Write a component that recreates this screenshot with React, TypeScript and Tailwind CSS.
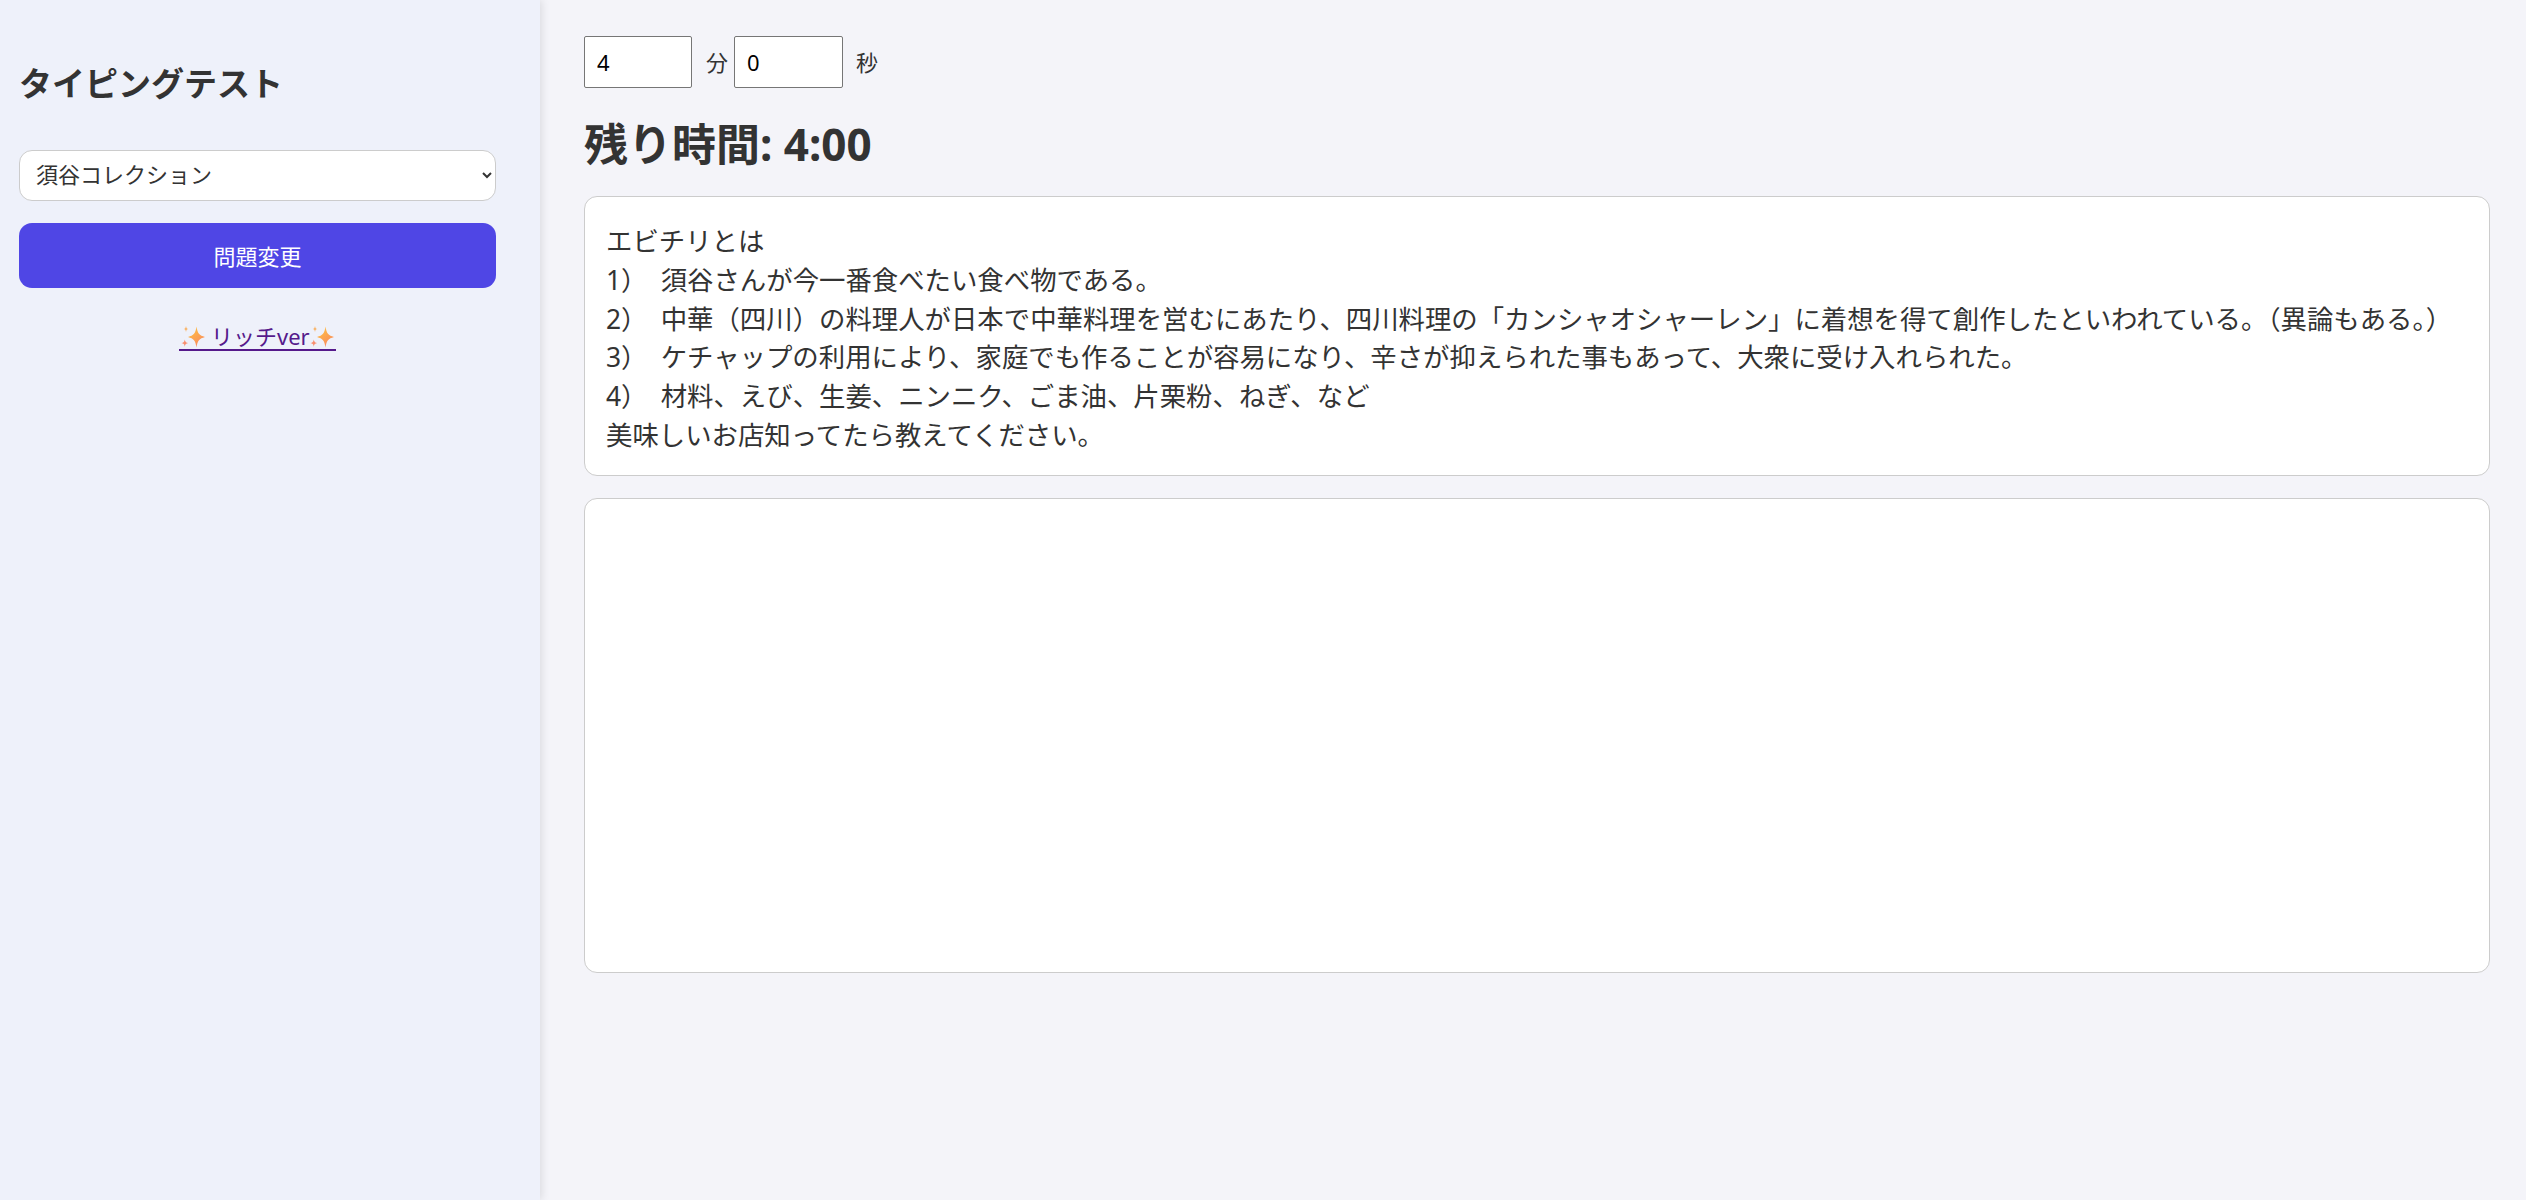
const fontStack = { fontFamily: '"Noto Sans", "Noto Sans CJK JP", sans-serif' };

const Sparkles = ({ id }: { id: string }) => (
  <svg viewBox="0 0 24 24" className="inline-block h-[24px] w-[24px] align-[-4px]">
    <defs>
      <linearGradient id={id} x1="0" y1="0" x2="0.6" y2="1">
        <stop offset="0" stopColor="#ffc83d" />
        <stop offset="1" stopColor="#f98a5f" />
      </linearGradient>
    </defs>
    <path d="M15.500 1.500c1 6.800 2.800 8.900 8.500 10.500-5.700 1.600-7.500 3.700-8.500 10.500-1-6.800-2.800-8.900-8.500-10.500 5.700-1.600 7.500-3.700 8.500-10.500z" fill={`url(#${id})`} />
    <path d="M5 1c.3 2 .8 2.700 2.300 3C5.800 4.300 5.300 5 5 7 4.700 5 4.200 4.300 2.700 4 4.200 3.700 4.700 3 5 1z" fill="#f9b05f" />
    <path d="M3.800 14.500c.4 2.400 1.200 3.200 3.400 3.600-2.200.4-3 1.200-3.400 3.600-.4-2.400-1.200-3.200-3.400-3.600 2.200-.4 3-1.200 3.400-3.600z" fill="#f98f6f" />
  </svg>
);

const problem = [
  'エビチリとは',
  '1）　須谷さんが今一番食べたい食べ物である。',
  '2）　中華（四川）の料理人が日本で中華料理を営むにあたり、四川料理の「カンシャオシャーレン」に着想を得て創作したといわれている。（異論もある。）',
  '3）　ケチャップの利用により、家庭でも作ることが容易になり、辛さが抑えられた事もあって、大衆に受け入れられた。',
  '4）　材料、えび、生姜、ニンニク、ごま油、片栗粉、ねぎ、など',
  '美味しいお店知ってたら教えてください。',
];

export default function App() {
  return (
    <div className="flex h-[1200px] bg-[#f4f4f9] text-[#333]" style={fontStack}>
      <aside className="w-[540px] shrink-0 bg-[#eef1fa] pl-[19px] pr-[44px] pt-[30px] shadow-[2px_0_8px_rgba(0,0,0,0.1)]">
        <h1 className="mt-[32px] text-[33px] font-bold leading-[44px]">タイピングテスト</h1>
        <select className="mt-[44px] block h-[51px] w-full rounded-[13px] border border-[#ccc] bg-white pb-[4px] pl-[12px] text-[22px]">
          <option>須谷コレクション</option>
        </select>
        <button type="button" className="mt-[22px] block h-[65px] w-full rounded-[13px] bg-[#4f46e5] pt-[2px] text-[22px] text-white">
          問題変更
        </button>
        <div className="mt-[32px] text-center text-[22px] leading-[32px]">
          <a href="#" className="inline-block border-b-2 border-[#551a8b] px-[2px] leading-[26px] text-[#551a8b]">
            <Sparkles id="spark-a" /> リッチver<Sparkles id="spark-b" />
          </a>
        </div>
      </aside>
      <main className="min-w-0 flex-1 pl-[44px] pr-[36px] pt-[36px]">
        <div className="flex items-center text-[22px]">
          <input defaultValue="4" className="h-[52px] w-[108px] rounded-[2px] border border-[#767676] bg-white pl-[12px] text-[22px] text-black" />
          <span className="ml-[14px] mr-[6px]">分</span>
          <input defaultValue="0" className="h-[52px] w-[109px] rounded-[2px] border border-[#767676] bg-white pl-[12px] text-[22px] text-black" />
          <span className="ml-[13px]">秒</span>
        </div>
        <h2 className="mt-[26px] text-[44px] font-bold leading-[60px]">残り時間: 4:00</h2>
        <div className="mt-[22px] h-[280px] rounded-[13px] border border-[#ccc] bg-white px-[21px] pt-[25px] text-[26.400px] leading-[38.800px]">
          {problem.map((line) => (
            <div key={line}>{line}</div>
          ))}
        </div>
        <div className="mt-[22px] h-[475px] rounded-[13px] border border-[#ccc] bg-white" />
      </main>
    </div>
  );
}
